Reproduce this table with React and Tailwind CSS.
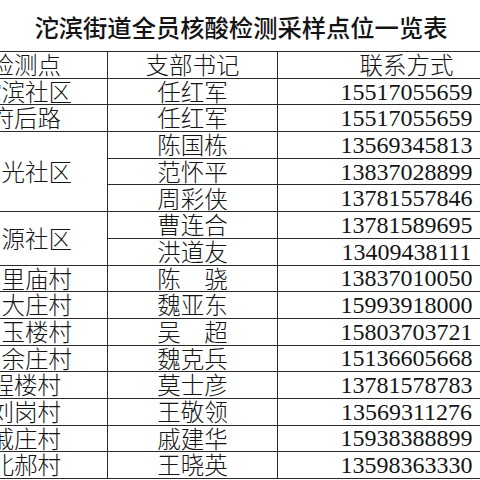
import React from 'react';

const cjk = { fontFamily: '"Noto Sans CJK SC", sans-serif' };
const num = { fontFamily: '"Liberation Serif", "Noto Sans CJK SC", serif' };

// left cells: text, pr class (where the visible end sits), rows spanned
const rows = [
    { site: '沱滨社区', pr: 'pr-[35px]', span: 1, people: [['任红军', '15517055659']] },
    { site: '府后路', pr: 'pr-[46px]', span: 1, people: [['任红军', '15517055659']] },
    {
        site: '光社区', pr: 'pr-[35px]', span: 3, people: [
            ['陈国栋', '13569345813'],
            ['范怀平', '13837028899'],
            ['周彩侠', '13781557846'],
        ]
    },
    {
        site: '源社区', pr: 'pr-[35px]', span: 2, people: [
            ['曹连合', '13781589695'],
            ['洪道友', '13409438111'],
        ]
    },
    { site: '里庙村', pr: 'pr-[35px]', span: 1, people: [['陈　骁', '13837010050']] },
    { site: '大庄村', pr: 'pr-[35px]', span: 1, people: [['魏亚东', '15993918000']] },
    { site: '玉楼村', pr: 'pr-[35px]', span: 1, people: [['吴　超', '15803703721']] },
    { site: '余庄村', pr: 'pr-[35px]', span: 1, people: [['魏克兵', '15136605668']] },
    { site: '程楼村', pr: 'pr-[46px]', span: 1, people: [['莫士彦', '13781578783']] },
    { site: '刘岗村', pr: 'pr-[46px]', span: 1, people: [['王敬领', '13569311276']] },
    { site: '戚庄村', pr: 'pr-[46px]', span: 1, people: [['戚建华', '15938388899']] },
    { site: '北郝村', pr: 'pr-[46px]', span: 1, people: [['王晓英', '13598363330']] },
];

const spanClass = { 1: 'row-span-1', 2: 'row-span-2', 3: 'row-span-3' };

const cell = 'border-r border-b border-[#2a2a2a] flex items-center leading-none whitespace-nowrap';

export default function App() {
    return (
        <div className="w-[480px] h-[480px] overflow-hidden bg-white text-[#141414]">
            {/* Title */}
            <div className="h-[51px] flex items-center justify-center pt-1 pl-[2px] text-[24.3px] font-medium" style={cjk}>
                沱滨街道全员核酸检测采样点位一览表
            </div>

            {/* Table */}
            <div
                className="-ml-[60px] w-[596px] grid grid-cols-[168px_170px_258px] auto-rows-[26.69px] border-t border-[#2a2a2a] text-[23.5px] font-light"
                style={cjk}
            >
                <div className={`${cell} justify-end pr-[46px]`}>检测点</div>
                <div className={`${cell} justify-center`}>支部书记</div>
                <div className={`${cell} justify-center`}>联系方式</div>

                {rows.map((r) => (
                    <React.Fragment key={r.site}>
                        <div className={`${cell} ${spanClass[r.span]} justify-end ${r.pr}`}>{r.site}</div>
                        {r.people.map(([name, phone]) => (
                            <React.Fragment key={phone}>
                                <div className={`${cell} justify-center`}>{name}</div>
                                <div className={`${cell} justify-center text-[24px] font-normal`} style={num}>{phone}</div>
                            </React.Fragment>
                        ))}
                    </React.Fragment>
                ))}
            </div>
        </div>
    );
}
